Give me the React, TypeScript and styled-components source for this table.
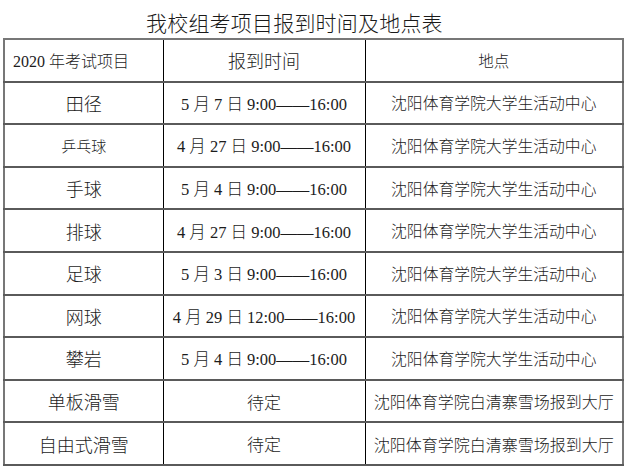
import * as React from "react"
import styled, { createGlobalStyle } from "styled-components"

const GlobalStyle = createGlobalStyle`
  html, body {
    margin: 0;
    padding: 0;
    background: #fff;
  }
  body {
    font-family: "Liberation Serif", "Noto Sans CJK SC", serif;
    font-weight: 300;
    color: #1c1c1c;
  }
`

type Row = {
  sport: string
  sportSize?: number
  time: string
  place: string
}

const rows: Row[] = [
  { sport: "田径", time: "5 月 7 日 9:00——16:00", place: "沈阳体育学院大学生活动中心" },
  { sport: "乒乓球", sportSize: 15, time: "4 月 27 日 9:00——16:00", place: "沈阳体育学院大学生活动中心" },
  { sport: "手球", time: "5 月 4 日 9:00——16:00", place: "沈阳体育学院大学生活动中心" },
  { sport: "排球", time: "4 月 27 日 9:00——16:00", place: "沈阳体育学院大学生活动中心" },
  { sport: "足球", time: "5 月 3 日 9:00——16:00", place: "沈阳体育学院大学生活动中心" },
  { sport: "网球", time: "4 月 29 日 12:00——16:00", place: "沈阳体育学院大学生活动中心" },
  { sport: "攀岩", time: "5 月 4 日 9:00——16:00", place: "沈阳体育学院大学生活动中心" },
  { sport: "单板滑雪", time: "待定", place: "沈阳体育学院白清寨雪场报到大厅" },
  { sport: "自由式滑雪", time: "待定", place: "沈阳体育学院白清寨雪场报到大厅" },
]

function App() {
  return (
    <Page>
      <GlobalStyle />
      <Title>我校组考项目报到时间及地点表</Title>
      <Table>
        <colgroup>
          <col style={{ width: 159 }} />
          <col style={{ width: 202 }} />
          <col style={{ width: 258 }} />
        </colgroup>
        <tbody>
          <Tr>
            <Cell $size={16} $align="left">2020 年考试项目</Cell>
            <Cell $size={18}>报到时间</Cell>
            <Cell $size={15.5}>地点</Cell>
          </Tr>
          {rows.map((r) => (
            <Tr key={r.sport}>
              <Cell $size={r.sportSize ?? 18}>{r.sport}</Cell>
              <Cell $size={r.time === "待定" ? 17 : 16.5}>{r.time}</Cell>
              <Cell $size={r.place.length > 13 ? 16 : 15.8}>{r.place}</Cell>
            </Tr>
          ))}
        </tbody>
      </Table>
    </Page>
  )
}
export default App

const Page = styled.div`
  width: 626px;
  height: 470px;
  padding: 0 3px;
  box-sizing: border-box;
`

const Title = styled.div`
  height: 38px;
  box-sizing: border-box;
  padding: 6px 0 0 143px;
  line-height: 32px;
  font-family: "Noto Sans CJK SC", sans-serif;
  font-size: 21px;
  letter-spacing: 0.2px;
  color: #1a1a1a;
`

const Table = styled.table`
  width: 619px;
  table-layout: fixed;
  border-collapse: collapse;
  border: 2px solid #777;
`

const Tr = styled.tr`
  height: 42.6px;
  border-bottom: 2px solid #5a5a5a;
`

const Cell = styled.td<{ $size: number; $align?: "left" | "center" }>`
  padding: ${(p) => (p.$align === "left" ? "0 0 0 8px" : "0")};
  border-left: 1px solid #000;
  text-align: ${(p) => p.$align ?? "center"};
  vertical-align: middle;
  font-size: ${(p) => p.$size}px;
  white-space: nowrap;
  overflow: hidden;
  &:first-child {
    border-left: none;
  }
`
